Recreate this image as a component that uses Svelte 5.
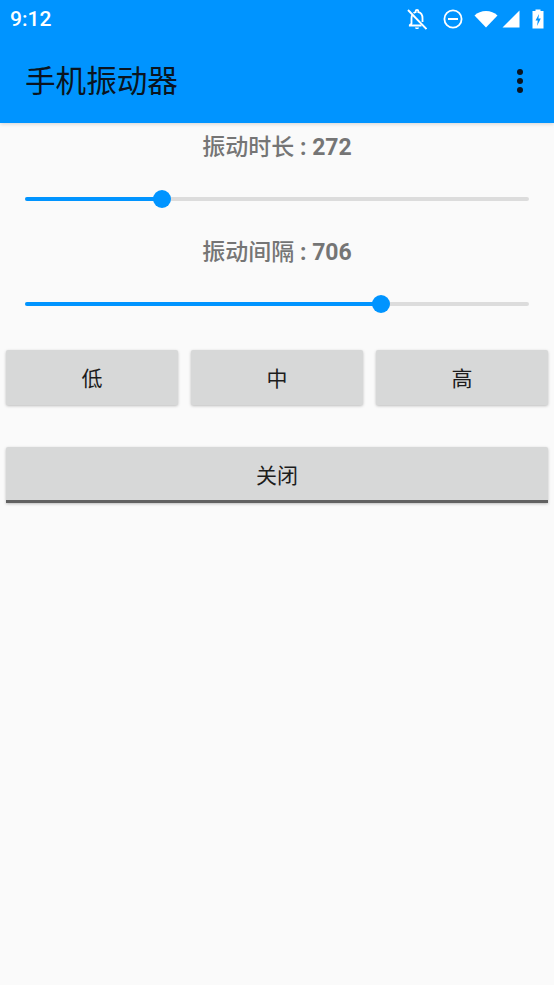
<script>
  const cjk = ['低', '中', '高'];
</script>

<div class="screen">
  <header class="appbar">
    <div class="status">
      <span class="time">9:12</span>
      <div class="icons">
        <svg class="i-bell" viewBox="2 1.500 20 21" width="20" height="21"><path d="M7.300 7.500C6.800 8.400 6.500 9.500 6.500 10.700V16L4.800 17.600V18H16.500M8.600 5.600C9.200 5.100 9.900 4.800 10.700 4.600V3.600C10.700 2.900 11.300 2.500 12 2.500S13.300 2.900 13.300 3.600V4.600C16 5.200 17.500 7.600 17.500 10.700V14.500" fill="none" stroke="#fff" stroke-width="1.800"/><path d="M10 20H14C14 21 13 21.600 12 21.600S10 21 10 20Z" fill="#fff"/><path d="M3 2.500L21.500 21.500" stroke="#fff" stroke-width="1.900"/></svg>
        <svg class="i-dnd" viewBox="0 0 20 20" width="20" height="20"><circle cx="10" cy="10" r="8.600" fill="none" stroke="#fff" stroke-width="1.800"/><rect x="5" y="9" width="10" height="2" fill="#fff"/></svg>
        <svg class="i-wifi" viewBox="0 0 24 18" width="24" height="18"><path d="M0.500 5.500C3.500 2.500 7.500 1 12 1S20.500 2.500 23.500 5.500L12 17.500Z" fill="#fff"/></svg>
        <svg class="i-signal" viewBox="0 0 18 18" width="18" height="18"><path d="M17.500 0.500V17.500H0.500Z" fill="#fff"/></svg>
        <svg class="i-batt" viewBox="0 0 12 20" width="12" height="20"><path d="M3.500 0.500H8.500V2H11.500V19.500H0.500V2H3.500Z" fill="#fff"/><path d="M7 5L3.500 11.500H5.800L5 17L8.800 9.500H6.400Z" fill="#0094ff"/></svg>
      </div>
    </div>
    <div class="toolbar">
      <span class="title">手机振动器</span>
      <svg class="more" viewBox="0 0 6 24" width="6" height="24"><circle cx="3" cy="3" r="3" fill="#0a1420"/><circle cx="3" cy="12" r="3" fill="#0a1420"/><circle cx="3" cy="21" r="3" fill="#0a1420"/></svg>
    </div>
  </header>

  <main class="content">
    <div class="label first">振动时长 <span class="value">: 272</span></div>
    <div class="slider"><div class="active w1"></div><div class="thumb"></div></div>
    <div class="label second">振动间隔 <span class="value">: 706</span></div>
    <div class="slider"><div class="active w2"></div><div class="thumb"></div></div>

    <div class="row">
      {#each cjk as t}
        <button class="btn">{t}</button>
      {/each}
    </div>
    <button class="btn close">关闭</button>
  </main>
</div>

<style>
  :global(body) {
    margin: 0;
    background: #fafafa;
  }
  .screen {
    width: 554px;
    height: 985px;
    background: #fafafa;
    overflow: hidden;
    font-family: Roboto, "Noto Sans CJK SC", sans-serif;
  }
  .appbar {
    background: #0094ff;
    height: 123px;
    box-shadow: 0 1px 4px rgba(0, 0, 0, 0.16);
    position: relative;
  }
  .status {
    height: 38px;
    display: flex;
    align-items: center;
    justify-content: space-between;
    padding: 0 10px 0 10px;
  }
  .time {
    color: #fff;
    font-size: 21px;
    font-weight: 500;
  }
  .icons {
    display: flex;
    align-items: center;
  }
  .i-bell { margin-right: 16px; }
  .i-dnd { margin-right: 11px; }
  .i-wifi { margin-right: 4px; }
  .i-signal { margin-right: 12px; }
  .toolbar {
    height: 85px;
    display: flex;
    align-items: center;
    justify-content: space-between;
    padding: 0 31px 0 25px;
  }
  .title {
    font-size: 30.600px;
    color: #0a1420;
    line-height: 1;
    margin-top: 3px;
  }
  .label {
    text-align: center;
    color: #757575;
    font-size: 23px;
    font-weight: 500;
    line-height: 30px;
  }
  .value {
    font-weight: 700;
  }
  .first { padding-top: 10px; }
  .second { padding-top: 37px; }
  .slider {
    position: relative;
    height: 4px;
    background: #dcdcdc;
    margin: 0 25px;
    display: flex;
    align-items: center;
    border-radius: 2px;
  }
  .first + .slider { margin-top: 34px; }
  .second + .slider { margin-top: 34px; }
  .active {
    height: 4px;
    background: #0094ff;
    border-radius: 2px;
  }
  .w1 { width: 137px; }
  .w2 { width: 356px; }
  .thumb {
    width: 18px;
    height: 18px;
    border-radius: 50%;
    background: #0094ff;
    margin-left: -9px;
    flex: none;
  }
  .row {
    display: grid;
    grid-template-columns: repeat(3, 1fr);
    gap: 13px;
    padding: 0 6px;
    margin-top: 44px;
  }
  .btn {
    height: 55px;
    border: none;
    border-radius: 2px;
    background: #d7d8d8;
    box-shadow: 0 1px 3px rgba(0, 0, 0, 0.25);
    color: #1c1c1c;
    font-family: inherit;
    font-size: 21px;
    padding: 0;
  }
  .row .btn { padding-bottom: 1px; }
  .close {
    display: block;
    width: 542px;
    height: 56px;
    margin: 42px 0 0 6px;
    box-sizing: border-box;
    border-bottom: 3px solid #616161;
    border-radius: 2px 2px 0 0;
  }
</style>
